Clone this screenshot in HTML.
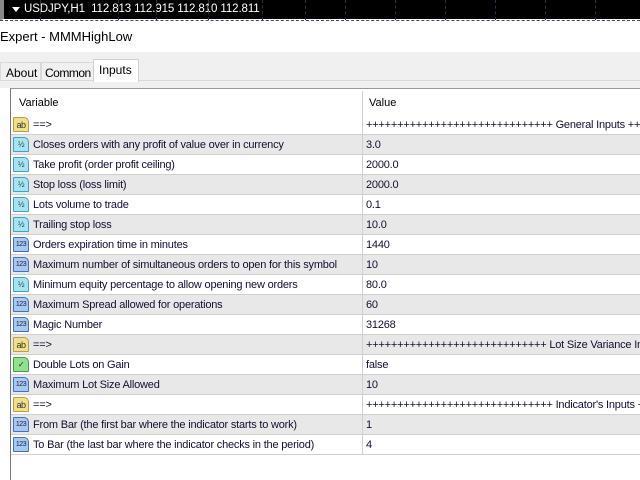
<!DOCTYPE html>
<html><head><style>
*{margin:0;padding:0;box-sizing:border-box}
body{width:640px;height:480px;overflow:hidden;background:#fff;font-family:"Liberation Sans",sans-serif;position:relative;color:#000}
#top{position:absolute;left:0;top:0;width:640px;height:20px;background:#000;border-left:4px solid #888;border-bottom:1px solid #fff}
#top span{position:absolute;left:20px;top:3px;color:#fff;font-size:11.5px;letter-spacing:-0.1px}
#top .tri{position:absolute;left:8px;top:7px;width:0;height:0;border-left:4px solid transparent;border-right:4px solid transparent;border-top:5px solid #fff}
.dash{position:absolute;top:0;height:20px;border-left:1px dashed #234}
#hline{position:absolute;left:0;top:20px;width:640px;height:1px;border-top:1px dashed #446}
#title{position:absolute;left:0;top:29px;font-size:13px;color:#000}
#tabbar{position:absolute;left:0;top:52px;width:640px;height:36px;background:#f0f0f0}
.tab{position:absolute;top:62px;height:18px;border:1px solid #d9d9d9;border-bottom:none;background:#f0f0f0;font-size:12px;padding:3px 5px 0;white-space:nowrap}
#tabline{position:absolute;left:0;top:80px;width:640px;height:1px;background:#d9d9d9}
#panel{position:absolute;left:10px;top:88px;width:640px;height:392px;border-left:1px solid #777;border-top:1px solid #999;background:#fff}
.row{position:absolute;left:11px;width:629px;height:20px;border-bottom:1px solid #d0d0d0;font-size:11px;letter-spacing:-0.2px;color:#101030}
.row.g{background:#e8e8e8}
.row .n{position:absolute;left:22px;top:4px;white-space:nowrap}
.row .v{position:absolute;left:355px;top:4px;white-space:nowrap}
.row .sep{position:absolute;left:351px;top:0;height:20px;border-left:1px solid #d0d0d0}
.ic{position:absolute;left:2px;top:2px;width:16px;height:15px;font-size:8px;letter-spacing:-0.5px;text-align:center;line-height:14px;border-radius:1px 5px 1px 1px}
.ab{background:#f0e08a;border:1px solid #b8a040;color:#333;font-size:9px}
.fr{background:#a8e4f0;border:1px solid #40a0c0;color:#145}
.nb{background:#a8c8f0;border:1px solid #4070c0;color:#124;font-size:7px}
.bo{background:#90e090;border:1px solid #40a040;color:#040}
#hdr{position:absolute;left:11px;top:89px;width:629px;height:26px;font-size:11px}
#hdr .a{position:absolute;left:8px;top:8px}
#hdr .b{position:absolute;left:358px;top:8px}
#hdr .s{position:absolute;left:351px;top:2px;height:24px;border-left:1px solid #d0d0d0}
</style></head><body>
<div id="top"><div class="tri"></div><span>USDJPY,H1&nbsp; 112.813 112.915 112.810 112.811</span></div>
<div class="dash" style="left:40px"></div><div class="dash" style="left:118px"></div><div class="dash" style="left:156px"></div><div class="dash" style="left:208px"></div><div class="dash" style="left:262px"></div><div class="dash" style="left:305px"></div><div class="dash" style="left:345px"></div><div class="dash" style="left:395px"></div><div class="dash" style="left:445px"></div><div class="dash" style="left:495px"></div><div class="dash" style="left:545px"></div><div class="dash" style="left:595px"></div>
<div id="hline"></div>
<div id="title">Expert - MMMHighLow</div>
<div id="tabbar"></div>
<div id="tabline"></div>
<div class="tab" style="left:0;width:41px">About</div>
<div class="tab" style="left:41px;width:53px;padding:3px 3px 0;letter-spacing:-0.5px">Common</div>
<div class="tab" style="left:93px;top:59px;height:23px;width:46px;background:#fff;border-color:#d0d0d0;z-index:2">Inputs</div>
<div id="panel"></div>
<div id="hdr"><span class="a">Variable</span><span class="s"></span><span class="b">Value</span></div>

<div class="row" style="top:115px"><div class="ic ab">ab</div><span class="n">==&gt;</span><span class="sep"></span><span class="v">++++++++++++++++++++++++++++++ General Inputs ++</span></div>
<div class="row g" style="top:135px"><div class="ic fr">½</div><span class="n">Closes orders with any profit of value over in currency</span><span class="sep"></span><span class="v">3.0</span></div>
<div class="row" style="top:155px"><div class="ic fr">½</div><span class="n">Take profit (order profit ceiling)</span><span class="sep"></span><span class="v">2000.0</span></div>
<div class="row g" style="top:175px"><div class="ic fr">½</div><span class="n">Stop loss (loss limit)</span><span class="sep"></span><span class="v">2000.0</span></div>
<div class="row" style="top:195px"><div class="ic fr">½</div><span class="n">Lots volume to trade</span><span class="sep"></span><span class="v">0.1</span></div>
<div class="row g" style="top:215px"><div class="ic fr">½</div><span class="n">Trailing stop loss</span><span class="sep"></span><span class="v">10.0</span></div>
<div class="row" style="top:235px"><div class="ic nb">123</div><span class="n">Orders expiration time in minutes</span><span class="sep"></span><span class="v">1440</span></div>
<div class="row g" style="top:255px"><div class="ic nb">123</div><span class="n">Maximum number of simultaneous orders to open for this symbol</span><span class="sep"></span><span class="v">10</span></div>
<div class="row" style="top:275px"><div class="ic fr">½</div><span class="n">Minimum equity percentage to allow opening new orders</span><span class="sep"></span><span class="v">80.0</span></div>
<div class="row g" style="top:295px"><div class="ic nb">123</div><span class="n">Maximum Spread allowed for operations</span><span class="sep"></span><span class="v">60</span></div>
<div class="row" style="top:315px"><div class="ic nb">123</div><span class="n">Magic Number</span><span class="sep"></span><span class="v">31268</span></div>
<div class="row g" style="top:335px"><div class="ic ab">ab</div><span class="n">==&gt;</span><span class="sep"></span><span class="v">+++++++++++++++++++++++++++++ Lot Size Variance In</span></div>
<div class="row" style="top:355px"><div class="ic bo">✓</div><span class="n">Double Lots on Gain</span><span class="sep"></span><span class="v">false</span></div>
<div class="row g" style="top:375px"><div class="ic nb">123</div><span class="n">Maximum Lot Size Allowed</span><span class="sep"></span><span class="v">10</span></div>
<div class="row" style="top:395px"><div class="ic ab">ab</div><span class="n">==&gt;</span><span class="sep"></span><span class="v">++++++++++++++++++++++++++++++ Indicator's Inputs ++</span></div>
<div class="row g" style="top:415px"><div class="ic nb">123</div><span class="n">From Bar (the first bar where the indicator starts to work)</span><span class="sep"></span><span class="v">1</span></div>
<div class="row" style="top:435px"><div class="ic nb">123</div><span class="n">To Bar (the last bar where the indicator checks in the period)</span><span class="sep"></span><span class="v">4</span></div>
</body></html>
